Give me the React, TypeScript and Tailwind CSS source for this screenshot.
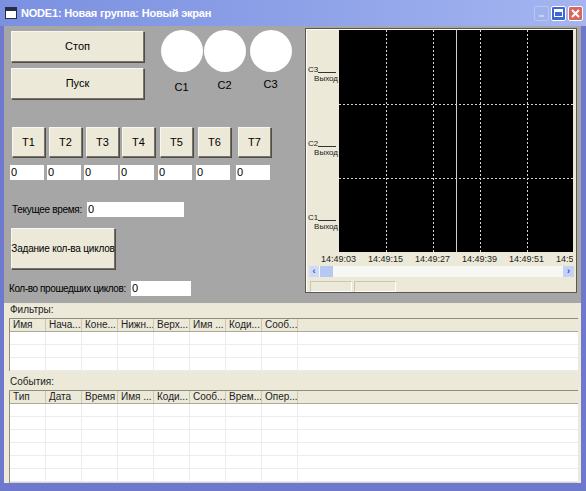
import React from 'react';

const BTN =
  'flex items-center justify-center whitespace-nowrap bg-[#ece9d8] border border-t-[#f7f6f0] border-l-[#f7f6f0] border-r-[#77756a] border-b-[#77756a] shadow-[1px_1px_0_#4f4d45]';
const INPUT = 'h-[15px] shrink-0 bg-white pl-[1px] leading-[15px] text-[11px]';

const T_COLS = [
  { id: 'T1', cls: 'ml-[6px]' },
  { id: 'T2', cls: 'ml-[2px]' },
  { id: 'T3', cls: 'ml-[2px]' },
  { id: 'T4', cls: 'ml-[1px]' },
  { id: 'T5', cls: 'ml-[3px]' },
  { id: 'T6', cls: 'ml-[3px]' },
  { id: 'T7', cls: 'ml-[5px]' },
];

const FILTER_COLS = ['Имя', 'Нача...', 'Коне...', 'Нижн...', 'Верх...', 'Имя ...', 'Коди...', 'Сооб...'];
const EVENT_COLS = ['Тип', 'Дата', 'Время', 'Имя ...', 'Коди...', 'Сооб...', 'Врем...', 'Опер...'];
const TIMES = ['14:49:03', '14:49:15', '14:49:27', '14:49:39', '14:49:51', '14:50:03'];

function TitleBar() {
  return (
    <div className="flex h-[26px] shrink-0 items-center bg-gradient-to-r from-[#7b90e0] via-[#8da1e8] to-[#a4b5f0] pl-[5px] pr-[3px]">
      <div className="flex h-[12px] w-[12px] flex-col border border-[#2a2a40] bg-white">
        <div className="h-[3px] bg-[#2a2a40]" />
      </div>
      <span className="ml-[4px] whitespace-nowrap text-[11px] font-bold tracking-[-0.2px] text-white">
        NODE1: Новая группа: Новый экран
      </span>
      <div className="ml-auto flex items-center gap-[2px]">
        <div className="flex h-[15px] w-[15px] items-end justify-center rounded-[2px] border border-[#b9c6f3] bg-[#9fb2ee] pb-[3px]">
          <div className="h-[2px] w-[5px] bg-[#c8d3f6]" />
        </div>
        <div className="flex h-[15px] w-[15px] items-center justify-center rounded-[2px] border border-white bg-[#3d67d6]">
          <div className="h-[8px] w-[9px] border border-t-[3px] border-white" />
        </div>
        <div className="flex h-[15px] w-[15px] items-center justify-center rounded-[2px] border border-white bg-[#d9675b]">
          <svg width="9" height="9" viewBox="0 0 9 9">
            <path d="M1 1 L8 8 M8 1 L1 8" stroke="white" strokeWidth="2" />
          </svg>
        </div>
      </div>
    </div>
  );
}

function Chart() {
  const w = 234;
  const h = 222;
  const vx = [47, 94, 141, 188];
  return (
    <svg width={w} height={h} className="block bg-black">
      {vx.map((x) => (
        <line key={x} x1={x + 0.5} y1={0} x2={x + 0.5} y2={h} stroke="#d8d8d8" strokeDasharray="2 2" />
      ))}
      {[74, 148].map((y) => (
        <line key={y} x1={0} y1={y + 0.5} x2={w} y2={y + 0.5} stroke="#d8d8d8" strokeDasharray="2 2" />
      ))}
      <line x1={117.5} y1={0} x2={117.5} y2={h} stroke="#cfcfcf" strokeWidth="1" />
    </svg>
  );
}

function ChartPanel() {
  return (
    <div className="mt-[2px] flex h-[265px] w-[272px] flex-col border border-[#5a5850] bg-[#ece9d8] shadow-[inset_1px_1px_0_#fff]">
      <div className="mt-[1px] flex">
        <div className="flex w-[33px] flex-col text-[8px] leading-[9px] text-[#222]">
          {['C3', 'C2', 'C1'].map((c) => (
            <div key={c} className="flex h-[74px] flex-col justify-end pb-[21px] pl-[2px]">
              <div className="flex items-end">
                <span>{c}</span>
                <span className="mb-[1px] h-[1px] w-[18px] bg-[#333]" />
              </div>
              <span className="self-end pr-[1px]">Выход</span>
            </div>
          ))}
        </div>
        <Chart />
      </div>
      <div className="mt-[2px] flex w-[267px] overflow-hidden pl-[9px] text-[9px] leading-[11px] text-[#222]">
        {TIMES.map((t) => (
          <span key={t} className="w-[47px] shrink-0 text-center">
            {t}
          </span>
        ))}
      </div>
      <div className="ml-[3px] mt-[1px] flex h-[11px] w-[265px] items-center bg-[#f7f7f3]">
        <div className="flex h-[11px] w-[10px] items-center justify-center bg-[#cfdaf7] text-[9px] font-bold text-[#2a4fbf]">‹</div>
        <div className="ml-[1px] h-[11px] w-[13px] bg-[#b7c8f3]" />
        <div className="ml-auto flex h-[11px] w-[11px] items-center justify-center bg-[#c3d2f6] text-[9px] font-bold text-[#2a4fbf]">›</div>
      </div>
      <div className="ml-[4px] mt-[4px] flex gap-[2px]">
        <div className="h-[11px] w-[42px] border border-[#c9c6b6] border-b-white border-r-white" />
        <div className="h-[11px] w-[42px] border border-[#c9c6b6] border-b-white border-r-white" />
      </div>
    </div>
  );
}

function TopArea() {
  return (
    <div className="flex h-[277px] shrink-0 bg-[#a6a6a6]">
      <div className="flex w-[301px] shrink-0 flex-col">
        <div className="ml-[7px] mt-[5px] flex">
          <div className="flex w-[133px] flex-col gap-[6px]">
            <div className={`${BTN} h-[31px]`}>Стоп</div>
            <div className={`${BTN} h-[31px]`}>Пуск</div>
          </div>
          <div className="ml-[16px] mt-[-1px] flex">
            {['C1', 'C2', 'C3'].map((c, i) => (
              <div key={c} className={`flex w-[43px] flex-col items-center ${i === 2 ? 'ml-[3px]' : 'ml-0'}`}>
                <div className="h-[42px] w-[42px] rounded-full bg-white" />
                <span className={`text-[11px] ${i === 0 ? 'mt-[7px]' : i === 1 ? 'mt-[5px]' : 'mt-[4px]'}`}>{c}</span>
              </div>
            ))}
          </div>
        </div>
        <div className="mt-[28px] flex">
          {T_COLS.map((t) => (
            <div key={t.id} className={`flex w-[35px] flex-col ${t.cls}`}>
              <div className={`${BTN} ml-[2px] h-[30px] w-[33px]`}>{t.id}</div>
              <div className={`${INPUT} mt-[8px] w-[34px]`}>0</div>
            </div>
          ))}
        </div>
        <div className="ml-[8px] mt-[22px] flex items-center">
          <span className="w-[75px] shrink-0 whitespace-nowrap text-[10px] tracking-[-0.3px]">Текущее время:</span>
          <div className={`${INPUT} w-[97px]`}>0</div>
        </div>
        <div className={`${BTN} ml-[7px] mt-[11px] h-[41px] w-[104px] text-[10px] tracking-[-0.2px]`}>Задание кол-ва циклов</div>
        <div className="ml-[5px] mt-[12px] flex items-center">
          <span className="w-[122px] shrink-0 whitespace-nowrap text-[10px] tracking-[-0.4px]">Кол-во прошедших циклов:</span>
          <div className={`${INPUT} h-[13px] w-[60px] leading-[13px]`}>0</div>
        </div>
      </div>
      <ChartPanel />
    </div>
  );
}

function ListSection({ title, cols, rows, band, last }: { title: string; cols: string[]; rows: number; band: string; last?: boolean }) {
  return (
    <div className="flex flex-col">
      <div className={`flex items-end pl-[6px] pb-[1px] text-[10px] text-[#222] ${band}`}>{title}</div>
      <div className={`ml-[5px] mr-[3px] flex flex-col border-l border-t border-[#8f8c80] ${last ? 'border-b-2 border-b-[#d8d5c6]' : ''}`}>
        <div className="flex h-[13px] border-b border-[#aca899] bg-[#ece9d8]">
          {cols.map((c) => (
            <div key={c} className="w-[36px] shrink-0 overflow-hidden whitespace-nowrap border-r border-[#c9c6b6] pl-[3px] text-[10px] leading-[12px] text-[#222]">
              {c}
            </div>
          ))}
          <div className="flex-1" />
        </div>
        <div className="flex flex-col bg-white">
          {Array.from({ length: rows }).map((_, i) => (
            <div key={i} className="flex h-[13px] border-b border-[#ececec]">
              {cols.map((c) => (
                <div key={c} className="w-[36px] shrink-0 border-r border-[#ececec]" />
              ))}
            </div>
          ))}
        </div>
      </div>
    </div>
  );
}

export default function App() {
  return (
    <div className="flex h-[491px] w-[586px] flex-col overflow-hidden bg-[#6e78cc] font-['Liberation_Sans',Arial,sans-serif] text-[11px] text-black">
      <TitleBar />
      <div className="mb-[8px] ml-[4px] mr-[5px] flex flex-1 flex-col overflow-hidden bg-[#ece9d8]">
        <TopArea />
        <ListSection title="Фильтры:" cols={FILTER_COLS} rows={3} band="h-[15px]" />
        <ListSection title="События:" cols={EVENT_COLS} rows={6} band="h-[19px]" last />
      </div>
    </div>
  );
}
